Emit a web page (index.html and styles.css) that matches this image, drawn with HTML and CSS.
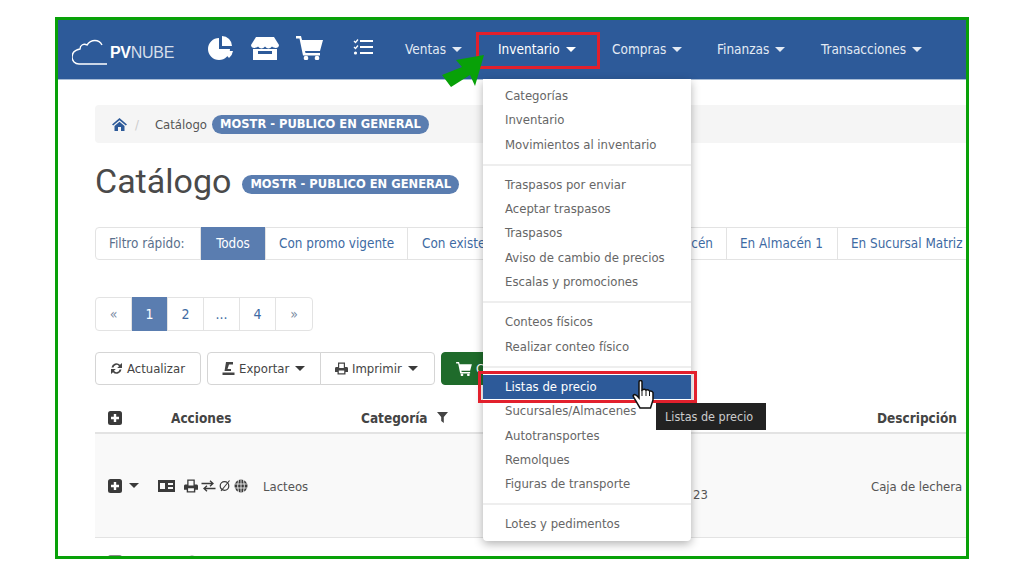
FILE: index.html
```html
<!DOCTYPE html>
<html lang="es">
<head>
    <meta charset="UTF-8">
    <title>Catálogo</title>
    <link rel="stylesheet" href="styles.css">
</head>
<body>
    <div class="frame">
        <header class="topbar">
            <div class="logo">
                <svg width="36" height="26" viewBox="0 0 36 26"><path d="M30 6 C27 0 19 0 15 6 C12 4 8 6 8 10 C3 11 0 14 0 18 C0 22 3 25 7 25 L35 25" fill="none" stroke="#fff" stroke-width="1.4"/></svg>
                <span class="logo-text"><b>PV</b>NUBE</span>
            </div>
            <div class="quick-icons">
                <svg width="26" height="24" viewBox="0 0 26 24"><path d="M11 2 V13 H22 A11 11 0 1 1 11 2Z M14 0 A10 10 0 0 1 24 10 H14Z M15 15 H25 A11 11 0 0 1 21 22Z" fill="#fff"/></svg>
                <svg width="28" height="24" viewBox="0 0 28 24"><path d="M5 1 H23 L28 9 C28 12 24 13 21 10.500 C19 13 16 13 14 10.500 C12 13 9 13 7 10.500 C4 13 0 12 0 9Z M2 13 H26 V24 H2Z" fill="#fff"/><rect x="7" y="15" width="14" height="3" fill="#2d5a99"/></svg>
                <svg width="27" height="24" viewBox="0 0 27 24"><path d="M0 0 H5 L6 4 H27 L24 15 H9 L9.500 17 H24 V19.500 H7 L3.500 2.500 H0Z" fill="#fff"/><circle cx="10" cy="22" r="2.300" fill="#fff"/><circle cx="21" cy="22" r="2.300" fill="#fff"/></svg>
            </div>
            <svg class="tasks-icon" width="20" height="16" viewBox="0 0 20 16"><path d="M7 2 H20 M7 8 H20 M7 14 H20" stroke="#fff" stroke-width="2"/><path d="M1 2 L2.500 3.500 L5 0.500 M1 8 L2.500 9.500 L5 6.500" stroke="#fff" stroke-width="1.300" fill="none"/><circle cx="2.500" cy="14" r="1.600" fill="#fff"/></svg>
            <nav class="menu">
                <a class="menu-ventas">Ventas <i class="caret"></i></a>
                <a class="menu-inventario">Inventario <i class="caret"></i></a>
                <a class="menu-compras">Compras <i class="caret"></i></a>
                <a class="menu-finanzas">Finanzas <i class="caret"></i></a>
                <a>Transacciones <i class="caret"></i></a>
            </nav>
        </header>

        <main class="content">
            <div class="breadcrumb">
                <svg width="15" height="13" viewBox="0 0 15 13"><path d="M7.500 0 L15 6.500 L13.800 7.500 L7.500 2.200 L1.200 7.500 L0 6.500Z M2.500 8 L7.500 3.800 L12.500 8 V13 H9 V9 H6 V13 H2.500Z" fill="#2d5a99"/></svg>
                <span class="slash">/</span>
                <span>Catálogo</span>
                <span class="badge">MOSTR - PUBLICO EN GENERAL</span>
            </div>

            <div class="title-row">
                <h1>Catálogo</h1>
                <span class="badge">MOSTR - PUBLICO EN GENERAL</span>
            </div>

            <div class="filters">
                <span class="filter-label">Filtro rápido:</span>
                <a class="active">Todos</a>
                <a class="f-promo">Con promo vigente</a>
                <a class="f-exist"><span>Con existe</span><span>cén</span></a>
                <a class="f-alm">En Almacén 1</a>
                <a>En Sucursal Matriz</a>
            </div>

            <div class="pagination">
                <a class="arrow-pg">«</a><a class="active">1</a><a>2</a><a>...</a><a>4</a><a class="arrow-pg">»</a>
            </div>

            <div class="toolbar">
                <button class="btn btn-refresh"><svg width="13" height="13" viewBox="0 0 13 13"><path d="M1.500 5.500 A5 5 0 0 1 10 2.800 L12 1 V6 H7.200 L9 4.200 A3 3 0 0 0 3.500 5.500Z M11.500 7.500 A5 5 0 0 1 3 10.200 L1 12 V7 H5.800 L4 8.800 A3 3 0 0 0 9.500 7.500Z" fill="#444"/></svg> Actualizar</button>
                <div class="btn-group">
                    <button class="btn"><svg width="13" height="13" viewBox="0 0 13 13"><path d="M4 0 H11 V2.500 H7 L5.500 7 H9 V9 H2.500Z M0.500 10.500 H12.500 V13 H0.500Z" fill="#444"/></svg> Exportar <i class="caret dark"></i></button>
                    <button class="btn"><svg width="13" height="13" viewBox="0 0 13 13"><path d="M3 0.500 H10 V5 H12 Q13 5 13 6.500 V10 H10.500 V12.500 H2.500 V10 H0 V6.500 Q0 5 1 5 H3Z M4.200 1.700 V6 H8.800 V1.700Z M3.800 8.500 V11.300 H9.200 V8.500Z" fill="#444" fill-rule="evenodd"/></svg> Imprimir <i class="caret dark"></i></button>
                </div>
                <button class="btn btn-green"><svg width="16" height="14" viewBox="0 0 27 24"><path d="M0 0 H5 L6 4 H27 L24 15 H9 L9.500 17 H24 V19.500 H7 L3.500 2.500 H0Z" fill="#fff"/><circle cx="10" cy="22" r="2.300" fill="#fff"/><circle cx="21" cy="22" r="2.300" fill="#fff"/></svg> C</button>
            </div>

            <div class="table">
                <div class="t-row t-head">
                    <div class="col-exp"><svg class="plus" width="14" height="14" viewBox="0 0 14 14"><rect width="14" height="14" rx="2.500" fill="#3a3a3a"/><path d="M7 3 V11 M3 7 H11" stroke="#fff" stroke-width="2.400"/></svg></div>
                    <div class="col-act">Acciones</div>
                    <div class="col-cat">Categoría <svg width="11" height="11" viewBox="0 0 11 11"><path d="M0 0 H11 L6.800 5 V11 L4.200 9 V5Z" fill="#444"/></svg></div>
                    <div class="col-code"></div>
                    <div class="col-desc">Descripción</div>
                </div>
                <div class="t-row t-body">
                    <div class="col-exp"><svg class="plus" width="14" height="14" viewBox="0 0 14 14"><rect width="14" height="14" rx="2.500" fill="#3a3a3a"/><path d="M7 3 V11 M3 7 H11" stroke="#fff" stroke-width="2.400"/></svg> <i class="caret dark"></i></div>
                    <div class="col-act row-icons">
                        <svg width="17" height="12" viewBox="0 0 17 12"><path d="M0 0 H17 V12 H0Z M2 3 V9 H7 V3Z M10 3 V5 H15 V3Z M10 7 V9 H15 V7Z" fill="#3a3a3a" fill-rule="evenodd"/></svg>
                        <svg class="gap-l" width="14" height="14" viewBox="0 0 13 13"><path d="M3 0.500 H10 V5 H12 Q13 5 13 6.500 V10 H10.500 V12.500 H2.500 V10 H0 V6.500 Q0 5 1 5 H3Z M4.200 1.700 V6 H8.800 V1.700Z M3.800 8.500 V11.300 H9.200 V8.500Z" fill="#3a3a3a" fill-rule="evenodd"/></svg>
                        <svg width="15" height="12" viewBox="0 0 14 12"><path d="M0 3.500 H11 M8.500 0.800 L11.500 3.500 L8.500 6.200 M14 8.500 H3 M5.500 5.800 L2.500 8.500 L5.500 11.200" stroke="#3a3a3a" stroke-width="1.300" fill="none"/></svg>
                        <svg width="12" height="13" viewBox="0 0 12 13"><circle cx="5.500" cy="7" r="4.300" stroke="#3a3a3a" stroke-width="1.200" fill="none"/><path d="M2 12 L10.500 1.500" stroke="#3a3a3a" stroke-width="1.100"/></svg>
                        <svg width="14" height="14" viewBox="0 0 14 14"><circle cx="7" cy="7" r="6.500" fill="#3a3a3a"/><path d="M0.500 5 H13.500 M0.500 9 H13.500 M7 0.500 V13.500 M4.500 1 Q2.800 7 4.500 13 M9.500 1 Q11.200 7 9.500 13" stroke="#fff" stroke-width="0.800" fill="none"/></svg>
                    </div>
                    <div class="col-cat">Lacteos</div>
                    <div class="col-code">23</div>
                    <div class="col-desc">Caja de lechera</div>
                </div>
                <div class="t-row t-next">
                    <div class="col-exp"><svg class="plus" width="14" height="14" viewBox="0 0 14 14"><rect width="14" height="14" rx="2.500" fill="#8a8a8a"/></svg></div>
                    <div class="col-act row-icons"><svg class="next-icon" width="14" height="14" viewBox="0 0 14 14"><circle cx="7" cy="7" r="6.500" fill="#8a8a8a"/></svg></div>
                </div>
            </div>
        </main>

        <ul class="dropdown">
            <li>Categorías</li>
            <li>Inventario</li>
            <li>Movimientos al inventario</li>
            <li class="divider"></li>
            <li>Traspasos por enviar</li>
            <li>Aceptar traspasos</li>
            <li>Traspasos</li>
            <li>Aviso de cambio de precios</li>
            <li>Escalas y promociones</li>
            <li class="divider"></li>
            <li>Conteos físicos</li>
            <li>Realizar conteo físico</li>
            <li class="divider"></li>
            <li class="selected">Listas de precio</li>
            <li>Sucursales/Almacenes</li>
            <li>Autotransportes</li>
            <li>Remolques</li>
            <li>Figuras de transporte</li>
            <li class="divider"></li>
            <li>Lotes y pedimentos</li>
        </ul>

        <div class="tooltip">Listas de precio</div>
        <div class="mark mark-nav"></div>
        <div class="mark mark-item"></div>

        <svg class="green-arrow" width="46" height="36" viewBox="0 0 46 36"><polygon points="42,1 14,6 20,13 0,21 9,33 28,21 33,32" fill="#08a108"/></svg>

        <svg class="hand" width="24" height="30" viewBox="0 0 24 30"><path d="M7 2 Q7 0.500 8.500 0.500 Q10 0.500 10 2 V10 Q12.500 8.500 14 10 Q16.500 9 17.500 11 Q20 10.500 21 12.500 V20 L18.500 28 H8 L1.500 17 Q0.500 15 2.500 14.500 Q4 14.500 7 18Z" fill="#fff" stroke="#111" stroke-width="1.500"/><path d="M10 10 V16 M14 10 V16 M17.500 11 V16" stroke="#111" stroke-width="1"/></svg>
    </div>
</body>
</html>
```

FILE: styles.css
```css
* {
    box-sizing: border-box;
}
body {
    margin: 0;
    padding: 17px 55px;
    background-color: #fff;
    font-family: "DejaVu Sans Condensed", "DejaVu Sans", sans-serif;
    font-size: 13px;
    color: #555;
}
.frame {
    position: relative;
    width: 914px;
    height: 542px;
    border: 3px solid #08a108;
    overflow: hidden;
    background-color: #fff;
}

/* top bar */
.topbar {
    display: flex;
    align-items: center;
    height: 60px;
    padding-left: 14px;
    background-color: #2d5a99;
    border-bottom: 1px solid #a9bdd6;
    color: #fff;
}
.logo {
    display: flex;
    align-items: center;
    gap: 2px;
    width: 136px;
    padding-top: 5px;
}
.logo-text {
    font-family: "Liberation Sans", sans-serif;
    font-size: 16px;
    color: #d5deea;
    letter-spacing: -0.3px;
    padding-top: 2px;
}
.logo-text b {
    color: #fff;
    font-size: 16px;
}
.quick-icons {
    display: flex;
    align-items: center;
    gap: 17px;
    width: 145px;
    margin-bottom: 3px;
}
.tasks-icon {
    margin-bottom: 5px;
}
.menu {
    display: flex;
    margin-left: 32px;
    margin-bottom: 2px;
    font-size: 13.500px;
    color: #e3eaf4;
}
.menu a {
    white-space: nowrap;
}
.menu-ventas { width: 93px; }
.menu-inventario { width: 114px; color: #fff; }
.menu-compras { width: 105px; }
.menu-finanzas { width: 104px; }
.caret {
    display: inline-block;
    width: 0;
    height: 0;
    margin-left: 2px;
    vertical-align: 2px;
    border-left: 5px solid transparent;
    border-right: 5px solid transparent;
    border-top: 5px solid currentColor;
}
.caret.dark {
    color: #3a3a3a;
}

/* page */
.content {
    padding: 25px 0 0 37px;
    width: 920px;
}
.breadcrumb {
    display: flex;
    align-items: center;
    height: 38px;
    padding-left: 17px;
    background-color: #f5f5f5;
    border-radius: 4px;
    font-size: 13px;
}
.slash {
    margin: 0 16px 0 8px;
    color: #ccc;
}
.breadcrumb .badge {
    margin-left: 5px;
}
.badge {
    display: inline-block;
    margin-left: 4px;
    padding: 0 8px;
    height: 19px;
    line-height: 19px;
    border-radius: 10px;
    background-color: #5a7db0;
    color: #fff;
    font-family: "DejaVu Sans", sans-serif;
    font-size: 11.500px;
    font-weight: bold;
    white-space: nowrap;
}
.title-row {
    display: flex;
    align-items: center;
    height: 42px;
    margin-top: 17px;
}
.title-row .badge {
    margin-top: 6px;
}
h1 {
    margin: 0 7px 0 0;
    font-family: Roboto, sans-serif;
    font-size: 34px;
    font-weight: 400;
    color: #4a4a4a;
}
.filters {
    display: flex;
    width: 900px;
    height: 33px;
    margin-top: 25px;
    border: 1px solid #e3e3e3;
    border-radius: 4px;
    font-size: 13.400px;
    color: #3e6aa3;
    white-space: nowrap;
}
.filters > * {
    display: flex;
    align-items: center;
    padding: 0 13px;
    border-right: 1px solid #e3e3e3;
}
.filter-label {
    width: 105px;
    color: #5a6f8c;
}
.filters .active {
    width: 65px;
    margin-top: -1px;
    margin-bottom: -1px;
    background-color: #5a7db0;
    color: #fff;
    justify-content: center;
}
.filters .f-promo {
    width: 142px;
}
.filters .f-exist {
    width: 319px;
    padding-left: 14px;
    justify-content: space-between;
}
.filters .f-alm {
    width: 111px;
}
.pagination {
    display: inline-flex;
    height: 34px;
    margin-top: 37px;
    border: 1px solid #e3e3e3;
    border-radius: 4px;
    color: #3e6aa3;
}
.pagination a {
    display: flex;
    align-items: center;
    justify-content: center;
    width: 36px;
    border-right: 1px solid #e3e3e3;
    font-size: 14px;
}
.pagination a:last-child {
    border-right: 0;
}
.pagination .active {
    background-color: #5a7db0;
    color: #fff;
    margin-top: -1px;
    margin-bottom: -1px;
}
.pagination .arrow-pg {
    color: #7a8ba3;
}
.toolbar {
    display: flex;
    gap: 6px;
    margin-top: 21px;
}
.btn {
    display: inline-flex;
    align-items: center;
    gap: 4px;
    height: 33px;
    padding: 0 10px 0 14px;
    border: 1px solid #d5d5d5;
    border-radius: 4px;
    background-color: #fff;
    color: #444;
    font: inherit;
    white-space: nowrap;
}
.btn-refresh {
    width: 106px;
}
.btn-group {
    display: flex;
}
.btn-group .btn:first-child {
    border-radius: 4px 0 0 4px;
    width: 114px;
}
.btn-group .btn:last-child {
    margin-left: -1px;
    border-radius: 0 4px 4px 0;
    width: 115px;
}
.btn-green {
    width: 60px;
    background-color: #1f6b2b;
    border-color: #1f6b2b;
    color: #fff;
}

/* table */
.table {
    margin-top: 20px;
    width: 900px;
}
.t-row {
    display: grid;
    grid-template-columns: 63px 105px 408px 199px 125px;
    align-items: center;
}
.t-head {
    height: 29px;
    padding-bottom: 2px;
    border-bottom: 2px solid #e3e3e3;
    font-size: 13.500px;
    color: #444;
    font-weight: bold;
}
.t-head .col-act {
    padding-left: 13px;
}
.t-head .col-cat {
    padding-left: 98px;
}
.t-head .col-cat svg {
    margin-left: 5px;
}
.t-head .col-desc {
    margin-left: -18px;
    padding-left: 25px;
    white-space: nowrap;
}
.t-body {
    height: 104px;
    background-color: #f9f9f9;
    border-bottom: 1px solid #e3e3e3;
    font-size: 13px;
}
.col-exp {
    display: flex;
    align-items: center;
    gap: 5px;
    padding-left: 13px;
}
.row-icons {
    display: flex;
    align-items: center;
    gap: 3px;
}
.gap-l {
    margin-left: 6px;
}
.t-body .col-cat {
    padding-top: 1px;
}
.t-body .col-code {
    padding-top: 17px;
    padding-right: 162px;
    text-align: right;
}
.t-body .col-desc {
    margin-left: 1px;
    padding-top: 1px;
    white-space: nowrap;
}
.t-next {
    padding-top: 17px;
}
.next-icon {
    margin-left: 27px;
}

/* dropdown */
.dropdown {
    position: absolute;
    left: 425px;
    top: 59px;
    width: 208px;
    height: 462px;
    margin: 0;
    padding: 5px 0;
    list-style: none;
    background-color: #fff;
    border-radius: 0 0 4px 4px;
    box-shadow: 0 3px 10px rgba(0,0,0,0.3);
    font-size: 13px;
    color: #666;
}
.dropdown li {
    height: 24.300px;
    line-height: 24.300px;
    padding-left: 22px;
    white-space: nowrap;
}
.dropdown .divider {
    height: 2px;
    margin: 7px 0 7px;
    padding: 0;
    background-color: #eee;
}
.dropdown .selected {
    background-color: #2d5a99;
    color: #fff;
}

/* annotations */
.tooltip {
    position: absolute;
    left: 598px;
    top: 383px;
    width: 110px;
    height: 27px;
    line-height: 27px;
    padding-left: 9px;
    background-color: #222;
    color: #ccc;
    font-size: 12.500px;
}
.mark {
    position: absolute;
    border: 3px solid #e2202c;
}
.mark-nav {
    left: 418px;
    top: 12px;
    width: 124px;
    height: 37px;
}
.mark-item {
    left: 420px;
    top: 351px;
    width: 219px;
    height: 32px;
}
.green-arrow {
    position: absolute;
    left: 384px;
    top: 34px;
}
.hand {
    position: absolute;
    left: 574px;
    top: 360px;
}
```
